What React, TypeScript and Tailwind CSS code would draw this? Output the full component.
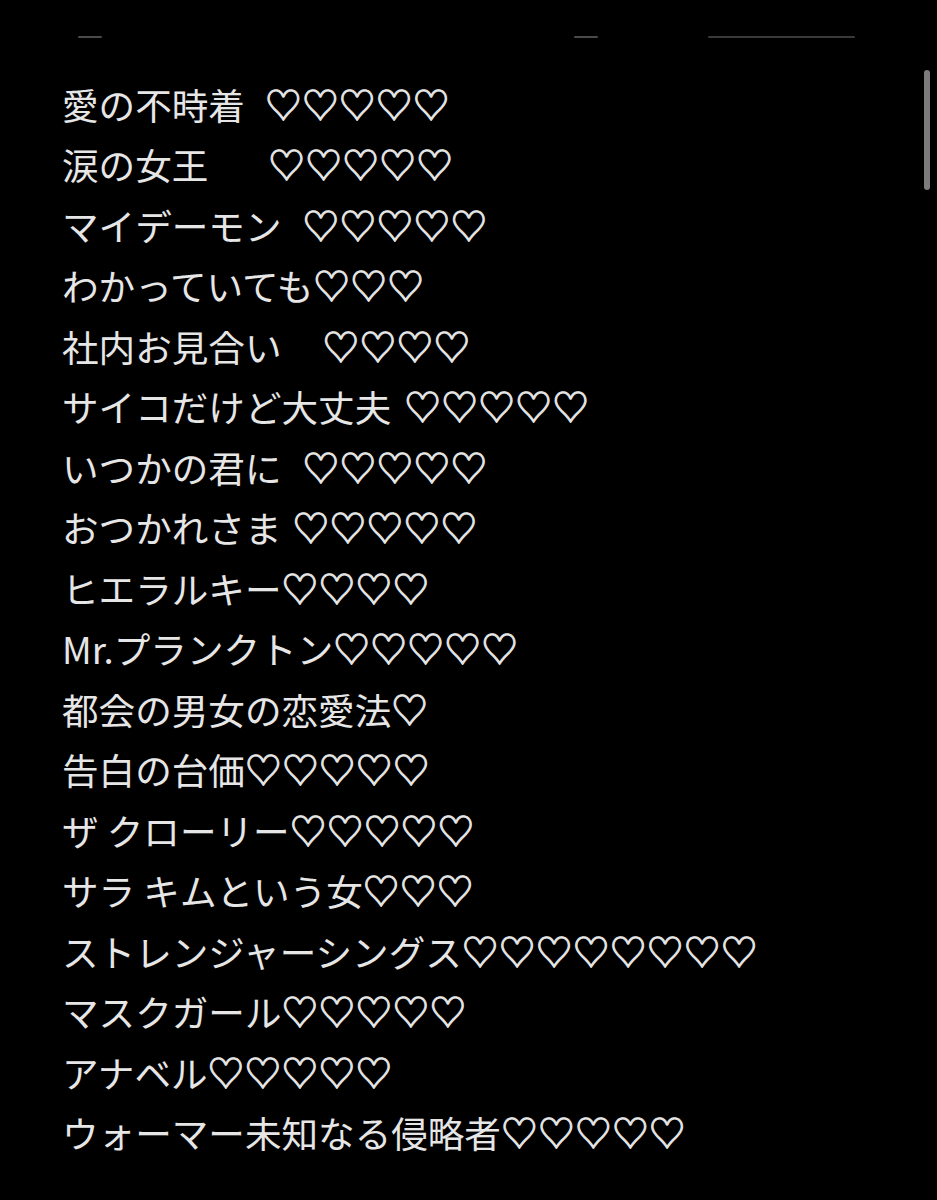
import React from "react";

type Row = {
  title: string;
  hearts: number;
  gap?: string;
};

const rows: Row[] = [
  {title: "愛の不時着", hearts: 5, gap: "ml-[20px]"},
  {title: "涙の女王", hearts: 5, gap: "ml-[60px]"},
  {title: "マイデーモン", hearts: 5, gap: "ml-[21px]"},
  {title: "わかっていても", hearts: 3},
  {title: "社内お見合い", hearts: 4, gap: "ml-[41px]"},
  {title: "サイコだけど大丈夫", hearts: 5, gap: "ml-[13px]"},
  {title: "いつかの君に", hearts: 5, gap: "ml-[21px]"},
  {title: "おつかれさま", hearts: 5, gap: "ml-[11px]"},
  {title: "ヒエラルキー", hearts: 4},
  {title: "Mr.プランクトン", hearts: 5},
  {title: "都会の男女の恋愛法", hearts: 1},
  {title: "告白の台価", hearts: 5},
  {title: "ザ クローリー", hearts: 5},
  {title: "サラ キムという女", hearts: 3},
  {title: "ストレンジャーシングス", hearts: 8},
  {title: "マスクガール", hearts: 5},
  {title: "アナベル", hearts: 5},
  {title: "ウォーマー未知なる侵略者", hearts: 5},
];

const ListRow = ({row}: {row: Row}) => (
  <div className="flex h-[60.5px] items-center whitespace-pre">
    <span>{row.title}</span>
    <span
      className={`-translate-y-[1px] tracking-[0.4px] [-webkit-text-stroke:1px_#e6e6e6] ${row.gap ?? ""}`}
    >
      {"♡".repeat(row.hearts)}
    </span>
  </div>
);

export default function App() {
  return (
    <div className="relative h-[1200px] w-full overflow-hidden bg-black">
      {/* cut-off bits of whatever sits above the note */}
      <div className="flex pt-[36px]">
        <div className="ml-[78px] h-[2px] w-[24px] rounded-full bg-[#4a4a4a]" />
        <div className="ml-[472px] h-[2px] w-[24px] rounded-full bg-[#4a4a4a]" />
        <div className="ml-[110px] h-[2px] w-[147px] rounded-full bg-[#3a3a3a]" />
      </div>

      <div
        className="pl-[62px] pt-[37px] text-[36.6px] leading-none text-[#e6e6e6]"
        style={{fontFamily: '"Noto Sans CJK JP", "Noto Sans", sans-serif'}}
      >
        {rows.map((row) => (
          <ListRow key={row.title} row={row} />
        ))}
      </div>

      <div className="absolute right-[7px] top-[70px] h-[120px] w-[6px] rounded-full bg-[#7c7c7c]" />
    </div>
  );
}
